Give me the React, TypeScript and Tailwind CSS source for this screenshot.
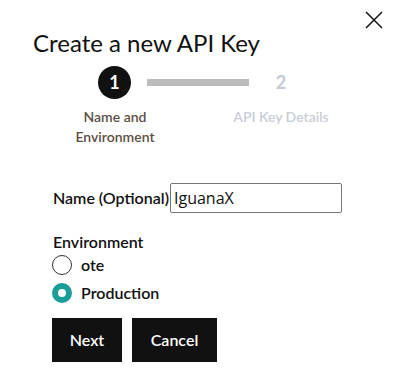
import { useState } from 'react'

// Step one of the "new API key" dialog: name + environment
export default function App() {
  const [name, setName] = useState('IguanaX')
  const [env, setEnv] = useState('Production')

  const envs = ['ote', 'Production']

  return (
    <div className="relative w-[396px] h-[381px] bg-white overflow-hidden font-['Lato','Liberation_Sans',sans-serif] text-[#111]">
      <button className="absolute top-[10px] right-[12px] w-[20px] h-[20px] flex items-center justify-center" aria-label="Close">
        <svg width="18" height="18" viewBox="0 0 18 18" fill="none" stroke="#111" strokeWidth="1.5">
          <path d="M1 1 L17 17 M17 1 L1 17" />
        </svg>
      </button>

      <h1 className="pt-[28px] pl-[33px] text-[24px] leading-[30px] font-normal">Create a new API Key</h1>

      <div className="mt-[8px] flex items-center pl-[98px]">
        <div className="w-[33px] h-[33px] rounded-full bg-[#111] text-white flex items-center justify-center text-[18px] font-bold">
          1
        </div>
        <div className="ml-[16px] w-[102px] h-[7px] bg-[#bcbcbc]" />
        <div className="w-[64px] text-center text-[18px] font-bold text-[#c6ccd4]">2</div>
      </div>

      <div className="mt-[8px] flex items-start text-[14px] leading-[20px] font-semibold">
        <div className="ml-[60px] w-[110px] text-center text-[#5c4e44]">Name and Environment</div>
        <div className="ml-[56px] w-[110px] text-center text-[#c9ced6]">API Key Details</div>
      </div>

      <div className="mt-[36px] pl-[53px] flex items-center">
        <label className="text-[16px] font-semibold">Name (Optional)</label>
        <input
          value={name}
          onChange={(e) => setName(e.target.value)}
          className="ml-[1px] w-[172px] h-[30px] border border-[#767676] rounded-[2px] px-[3px] text-[16px] font-['Open_Sans',sans-serif] outline-none"
        />
      </div>

      <div className="mt-[19px] pl-[53px] text-[16px] leading-[20px] font-semibold">Environment</div>

      <div className="mt-[3px] pl-[52px] flex flex-col gap-[8px]">
        {envs.map((e) => (
          <label key={e} className="flex items-center gap-[9px] h-[20px] cursor-pointer" onClick={() => setEnv(e)}>
            {env === e ? (
              <span className="w-[20px] h-[20px] rounded-full border-[6px] border-[#1a9c98] bg-white" />
            ) : (
              <span className="w-[20px] h-[20px] rounded-full border border-[#333] bg-white" />
            )}
            <span className="text-[16px] leading-[20px] font-semibold">{e}</span>
          </label>
        ))}
      </div>

      <div className="mt-[15px] pl-[52px] flex gap-[10px]">
        <button className="w-[70px] h-[44px] bg-[#111] text-white text-[16px] font-semibold">Next</button>
        <button className="w-[85px] h-[44px] bg-[#111] text-white text-[16px] font-semibold">Cancel</button>
      </div>
    </div>
  )
}
